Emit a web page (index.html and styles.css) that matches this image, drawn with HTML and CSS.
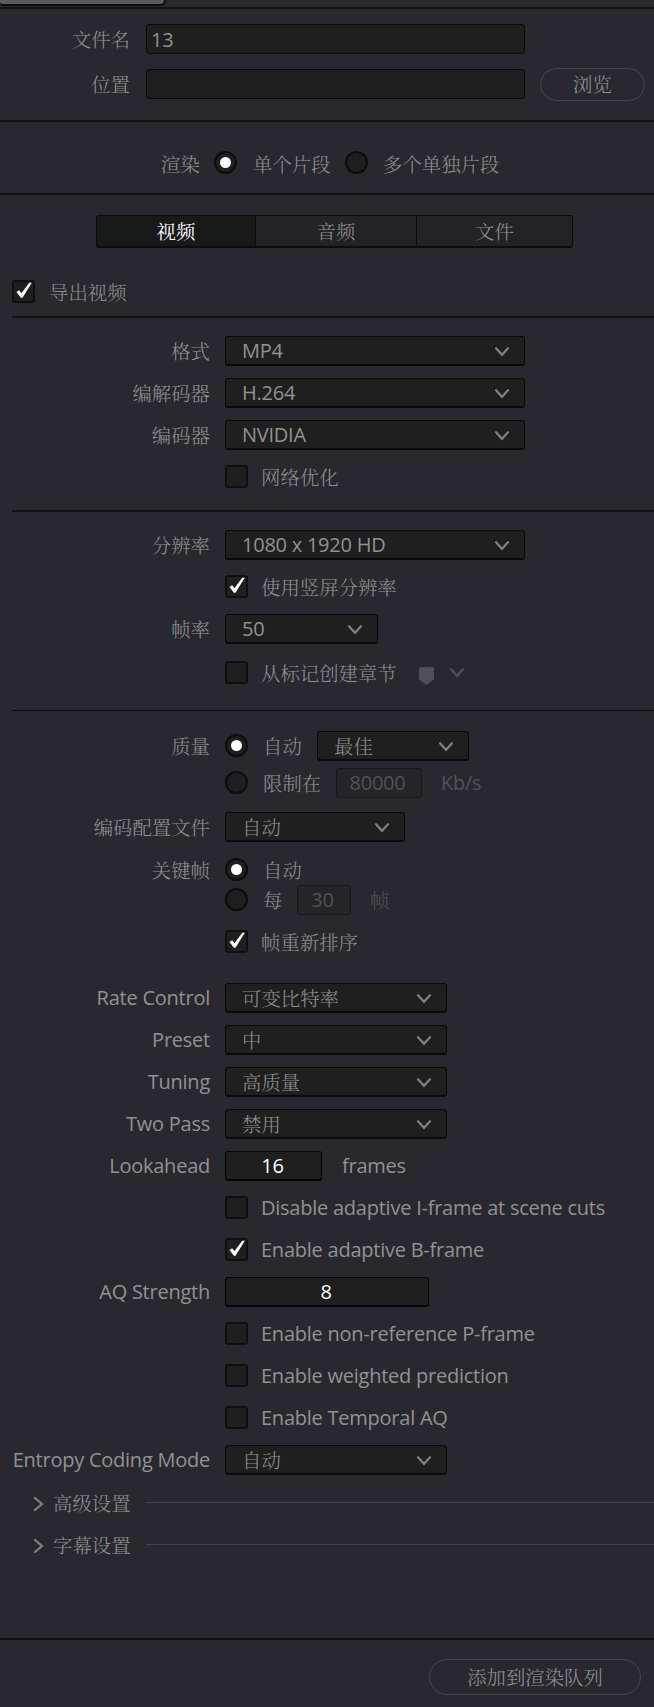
FILE: index.html
```html
<!DOCTYPE html>
<html lang="zh-CN">
<head>
<meta charset="utf-8">
<title>渲染设置</title>
<link rel="stylesheet" href="styles.css">
</head>
<body>
<svg class="defs" aria-hidden="true">
  <symbol id="down" viewBox="0 0 16 12"><path d="M2 2.2 8 8.8 14 2.2"/></symbol>
  <symbol id="right" viewBox="0 0 12 16"><path d="M2 2 9 8 2 14"/></symbol>
  <symbol id="tick" viewBox="0 0 21 21"><path d="M3.500 11 6.200 9.300 8.400 12.200 16.300 1.800 18.800 1.700 9.500 16.800 7.900 16.800Z"/></symbol>
</svg>
<div class="panel">
  <div class="topbar"><div class="topbar-tab"></div></div>

  <section class="target">
    <div class="line"><span class="label zh">文件名</span><div class="field">13</div></div>
    <div class="line"><span class="label zh">位置</span><div class="field"></div><button class="pill zh browse">浏览</button></div>
  </section>

  <section class="mode zh">
    <span class="mode-title">渲染</span>
    <i class="radio on"></i><span class="mode-one">单个片段</span>
    <i class="radio"></i><span>多个单独片段</span>
  </section>

  <section class="settings">
    <div class="tabs zh"><span class="tab active">视频</span><span class="tab">音频</span><span class="tab">文件</span></div>
    <div class="export zh"><i class="check"><svg><use href="#tick"/></svg></i><span>导出视频</span></div>

    <div class="group format">
      <div class="row"><span class="label zh">格式</span><div class="select w300">MP4<svg><use href="#down"/></svg></div></div>
      <div class="row"><span class="label zh">编解码器</span><div class="select w300">H.264<svg><use href="#down"/></svg></div></div>
      <div class="row"><span class="label zh">编码器</span><div class="select w300">NVIDIA<svg><use href="#down"/></svg></div></div>
      <div class="row"><span class="label"></span><i class="check"></i><span class="opt zh">网络优化</span></div>
    </div>

    <div class="group resolution">
      <div class="row"><span class="label zh">分辨率</span><div class="select w300">1080 x 1920 HD<svg><use href="#down"/></svg></div></div>
      <div class="row"><span class="label"></span><i class="check"><svg><use href="#tick"/></svg></i><span class="opt zh">使用竖屏分辨率</span></div>
      <div class="row"><span class="label zh">帧率</span><div class="select w153">50<svg><use href="#down"/></svg></div></div>
      <div class="row chapters"><span class="label"></span><i class="check"></i><span class="opt zh">从标记创建章节</span>
        <svg class="marker" viewBox="0 0 15 18"><path d="M2 0h11q2 0 2 2v10.5L7.5 18 0 12.500V2q0-2 2-2z"/></svg>
        <svg class="marker-arrow"><use href="#down"/></svg></div>
    </div>

    <div class="group quality">
      <div class="row q-auto"><span class="label zh">质量</span><i class="radio on"></i><span class="pick zh">自动</span><div class="select w152 zh">最佳<svg><use href="#down"/></svg></div></div>
      <div class="row q-limit"><span class="label"></span><i class="radio"></i><span class="pick zh three">限制在</span><div class="off w86">80000</div><span class="unit">Kb/s</span></div>
      <div class="row profile"><span class="label zh">编码配置文件</span><div class="select w180 zh">自动<svg><use href="#down"/></svg></div></div>
      <div class="row k-auto"><span class="label zh">关键帧</span><i class="radio on"></i><span class="pick zh">自动</span></div>
      <div class="row k-every"><span class="label"></span><i class="radio"></i><span class="pick zh one">每</span><div class="off w54">30</div><span class="unit zh">帧</span></div>
      <div class="row reorder"><span class="label"></span><i class="check"><svg><use href="#tick"/></svg></i><span class="opt zh">帧重新排序</span></div>

      <div class="row"><span class="label">Rate Control</span><div class="select w222 zh">可变比特率<svg><use href="#down"/></svg></div></div>
      <div class="row"><span class="label">Preset</span><div class="select w222 zh">中<svg><use href="#down"/></svg></div></div>
      <div class="row"><span class="label">Tuning</span><div class="select w222 zh">高质量<svg><use href="#down"/></svg></div></div>
      <div class="row"><span class="label">Two Pass</span><div class="select w222 zh">禁用<svg><use href="#down"/></svg></div></div>
      <div class="row"><span class="label">Lookahead</span><div class="number w97">16</div><span class="frames">frames</span></div>
      <div class="row"><span class="label"></span><i class="check"></i><span class="opt">Disable adaptive I-frame at scene cuts</span></div>
      <div class="row"><span class="label"></span><i class="check"><svg><use href="#tick"/></svg></i><span class="opt">Enable adaptive B-frame</span></div>
      <div class="row"><span class="label">AQ Strength</span><div class="number w204">8</div></div>
      <div class="row"><span class="label"></span><i class="check"></i><span class="opt">Enable non-reference P-frame</span></div>
      <div class="row"><span class="label"></span><i class="check"></i><span class="opt">Enable weighted prediction</span></div>
      <div class="row"><span class="label"></span><i class="check"></i><span class="opt">Enable Temporal AQ</span></div>
      <div class="row"><span class="label">Entropy Coding Mode</span><div class="select w222 zh">自动<svg><use href="#down"/></svg></div></div>
      <div class="fold zh"><svg><use href="#right"/></svg><span>高级设置</span><hr></div>
      <div class="fold zh"><svg><use href="#right"/></svg><span>字幕设置</span><hr></div>
    </div>
  </section>

  <footer class="footer"><button class="pill zh queue">添加到渲染队列</button></footer>
</div>
</body>
</html>
```

FILE: styles.css
```css
* { box-sizing: border-box; }

body {
  margin: 0;
  background: #29282e;
  color: #929292;
  font: 20px/28px "Open Sans", "Noto Sans CJK SC", sans-serif;
  letter-spacing: -0.24px;
}

.panel {
  display: flex;
  flex-direction: column;
  width: 654px;
  height: 1707px;
  overflow: hidden;
}

.zh {
  font-family: "Noto Serif CJK SC", "Noto Sans CJK SC", "Open Sans", serif;
  font-size: 19.4px;
  font-weight: 300;
  letter-spacing: 0;
  white-space: nowrap;
}

.defs { position: absolute; width: 0; height: 0; }

/* top strip and file target */
.topbar { height: 9px; border-bottom: 2px solid #121214; }
.topbar-tab {
  width: 166px;
  height: 6px;
  background: #585d63;
  border: solid #0c0c0e;
  border-width: 0 2px 2px 0;
  border-radius: 0 0 6px 4px;
}

.target {
  display: flex;
  flex-direction: column;
  gap: 15px;
  height: 113px;
  padding-top: 15px;
  border-bottom: 2px solid #121214;
}
.line { display: flex; align-items: center; height: 30px; }
.line .label { width: 130px; margin-right: 16px; }
.label { flex: none; width: 210px; margin-right: 15px; text-align: right; white-space: nowrap; }

.field {
  width: 379px;
  height: 30px;
  padding-left: 4px;
  line-height: 29px;
  background: #1f1f1f;
  border: 1px solid #09090a;
  border-radius: 3px;
}

.pill {
  padding: 0;
  background: transparent;
  color: #929292;
  border: 1px solid #45494e;
  border-radius: 18px;
}
.browse { width: 105px; height: 33px; margin-left: 15px; }

/* render mode */
.mode {
  display: flex;
  align-items: center;
  height: 73px;
  padding: 12px 0 0 161px;
  border-bottom: 2px solid #121214;
}
.mode .radio { margin: -2px 16px 0 15px; }
.mode-title { width: 38px; }
.mode-one { width: 77px; }
.mode-one + .radio { margin-right: 15px; }

.radio {
  flex: none;
  display: grid;
  place-items: center;
  width: 23px;
  height: 23px;
  margin-top: -2px;
  background: #1f1f1f;
  border: 2px solid #0c0c0d;
  border-radius: 50%;
}
.radio.on::after {
  content: "";
  width: 11px;
  height: 11px;
  background: #fff;
  border-radius: 50%;
}

/* tabs */
.settings { flex: 1; padding-top: 20px; }
.tabs {
  display: flex;
  width: 477px;
  height: 33px;
  margin-left: 96px;
  background: #232327;
  border: 1px solid #0c0c0d;
  border-bottom-width: 2px;
  border-radius: 3px;
}
.tab { width: 158px; line-height: 31px; text-align: center; }
.tab + .tab { width: 161px; border-left: 1px solid #0c0c0d; }
.tab:last-child { flex: 1; }
.tab.active { background: #181919; color: #fff; font-weight: 400; }

.export {
  display: flex;
  align-items: center;
  gap: 14px;
  height: 70px;
  margin-left: 12px;
  padding-top: 20px;
  border-bottom: 2px solid #121214;
}

.check {
  flex: none;
  width: 23px;
  height: 23px;
  margin-top: -2px;
  background: #1f1f1f;
  border: 2px solid #0f0f10;
  border-radius: 3px;
}
.check svg { display: block; width: 21px; height: 21px; margin: -1px; fill: #fff; }

/* setting rows */
.row { display: flex; align-items: center; height: 42px; }
.format { height: 192px; padding-top: 12px; }
.resolution {
  height: 200px;
  margin-left: 12px;
  padding-top: 12px;
  border-top: 2px solid #121214;
}
.resolution .label { width: 198px; }
.resolution .chapters { height: 46px; }
.quality { margin-left: 12px; border-top: 1px solid #0c0c0d; padding-top: 20px; }
.quality .label { width: 198px; }

.opt { margin-left: 13px; white-space: nowrap; }
.pick { width: 54px; margin-left: 15px; }
.pick.three { width: 73px; }
.pick.one { width: 34px; }

.select {
  display: flex;
  align-items: center;
  justify-content: space-between;
  height: 30px;
  padding: 0 14px 0 16px;
  background: #1f1f1f;
  border: 1px solid #09090a;
  border-bottom-width: 2px;
  border-radius: 3px;
}
.select.zh { line-height: 28px; }
.select svg { width: 16px; height: 12px; margin-top: 3px; }
.select svg, .fold svg, .marker-arrow {
  flex: none;
  fill: none;
  stroke: #818183;
  stroke-width: 2.2;
  stroke-linecap: round;
}
.w300 { width: 300px; }
.w222 { width: 222px; }
.w204 { width: 204px; }
.w180 { width: 180px; }
.w153 { width: 153px; }
.w152 { width: 152px; }
.w97 { width: 97px; }
.w86 { width: 86px; }
.w54 { width: 54px; }

.marker { width: 15px; height: 18px; margin: 6px 15px 0 22px; fill: #504f55; }
.row .marker-arrow { width: 16px; height: 12px; stroke: #515156; }

.off, .number {
  height: 30px;
  line-height: 28px;
  text-align: center;
  border: 1px solid #18181b;
  border-radius: 3px;
}
.off { background: #242429; color: #525256; padding-right: 3px; }
.number { background: #1f1f1f; border-color: #060607; border-bottom-width: 2px; color: #fff; padding-right: 2px; }
.unit { margin-left: 19px; color: #525256; }
.frames { margin-left: 20px; }

.q-auto { height: 30px; }
.q-limit { height: 30px; margin-top: 7px; }
.profile { height: 30px; margin-top: 14px; }
.k-auto { height: 24px; margin-top: 16px; }
.k-every { height: 30px; margin-top: 3px; }
.reorder { height: 24px; margin: 15px 0 23px; }

.fold { display: flex; align-items: center; height: 42px; padding-left: 21px; }
.fold svg { width: 12px; height: 16px; margin: 3px 8px 0 0; }
.fold span { width: 93px; padding-top: 2px; }
.fold hr { flex: 1; margin: 0; border: 0; border-top: 1px solid #434348; }

.footer {
  display: flex;
  justify-content: flex-end;
  height: 69px;
  padding: 19px 13px 0 0;
  border-top: 2px solid #0e0e10;
}
.queue { width: 212px; height: 36px; }
```
